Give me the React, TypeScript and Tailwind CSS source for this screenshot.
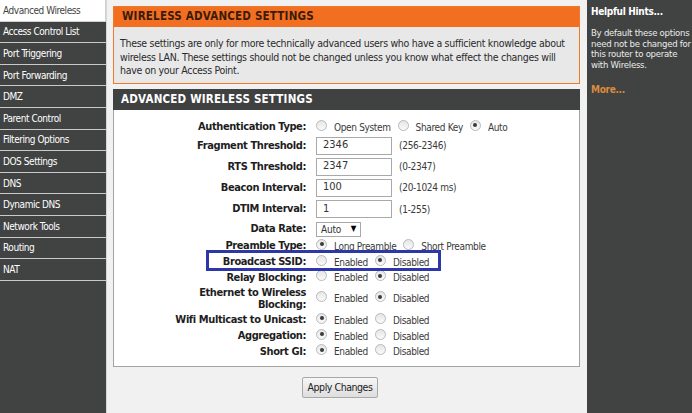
import React from 'react';

const navItems = [
  'Advanced Wireless',
  'Access Control List',
  'Port Triggering',
  'Port Forwarding',
  'DMZ',
  'Parent Control',
  'Filtering Options',
  'DOS Settings',
  'DNS',
  'Dynamic DNS',
  'Network Tools',
  'Routing',
  'NAT',
];

function Radio({ checked }: { checked?: boolean }) {
  return (
    <span className="relative inline-flex w-[11px] h-[11px] shrink-0 rounded-full border border-[#b9b9b9] bg-gradient-to-b from-[#e6e6e6] to-[#fafafa] items-center justify-center -mt-[4px]">
      {checked && <span className="w-[4px] h-[4px] rounded-full bg-[#3a3a3a]" />}
    </span>
  );
}

function RadioGroup({ opts }: { opts: [string, boolean][] }) {
  return (
    <div className="flex items-center">
      {opts.map(([label, checked], i) => (
        <div key={label} className={`flex items-center ${i > 0 ? 'ml-[7px]' : ''}`}>
          <Radio checked={checked} />
          <span className="ml-[7px] text-[10px] tracking-[-0.35px] text-[#3a3a3a]">{label}</span>
        </div>
      ))}
    </div>
  );
}

function TextField({ value, range }: { value: string; range: string }) {
  return (
    <div className="flex items-center">
      <div className="w-[76px] h-[18px] border border-[#a9a9a9] bg-white pl-[6px] flex items-center text-[11px] text-[#333]">
        {value}
      </div>
      <span className="ml-[7px] text-[10px] tracking-[-0.3px] text-[#3a3a3a]">{range}</span>
    </div>
  );
}

type Row = { label: React.ReactNode; h: string; control: React.ReactNode };

const enDis = (enabled: boolean): [string, boolean][] => [
  ['Enabled', enabled],
  ['Disabled', !enabled],
];

const rows: Row[] = [
  { label: 'Authentication Type:', h: 'h-[16px]', control: <RadioGroup opts={[['Open System', false], ['Shared Key', false], ['Auto', true]]} /> },
  { label: 'Fragment Threshold:', h: 'h-[21px]', control: <TextField value="2346" range="(256-2346)" /> },
  { label: 'RTS Threshold:', h: 'h-[21px]', control: <TextField value="2347" range="(0-2347)" /> },
  { label: 'Beacon Interval:', h: 'h-[21px]', control: <TextField value="100" range="(20-1024 ms)" /> },
  { label: 'DTIM Interval:', h: 'h-[22px]', control: <TextField value="1" range="(1-255)" /> },
  {
    label: 'Data Rate:',
    h: 'h-[18px]',
    control: (
      <div className="w-[45px] h-[15px] border border-[#a9a9a9] bg-white flex items-center justify-between px-[4px] text-[10px] tracking-[-0.2px] text-[#333]">
        <span>Auto</span>
        <span className="text-[8px] text-black">▼</span>
      </div>
    ),
  },
  { label: 'Preamble Type:', h: 'h-[16px]', control: <RadioGroup opts={[['Long Preamble', true], ['Short Preamble', false]]} /> },
  { label: 'Broadcast SSID:', h: 'h-[16px]', control: <RadioGroup opts={enDis(false)} /> },
  { label: 'Relay Blocking:', h: 'h-[15px]', control: <RadioGroup opts={enDis(false)} /> },
  {
    label: (
      <>
        Ethernet to Wireless
        <br />
        Blocking:
      </>
    ),
    h: 'h-[27px]',
    control: <RadioGroup opts={enDis(false)} />,
  },
  { label: 'Wifi Multicast to Unicast:', h: 'h-[16px]', control: <RadioGroup opts={enDis(true)} /> },
  { label: 'Aggregation:', h: 'h-[16px]', control: <RadioGroup opts={enDis(true)} /> },
  { label: 'Short GI:', h: 'h-[15px]', control: <RadioGroup opts={enDis(true)} /> },
];

export default function App() {
  return (
    <div className="w-[692px] h-[413px] flex overflow-hidden bg-[#f1f1f1] font-['DejaVu_Sans_Condensed','DejaVu_Sans',sans-serif] text-[#222]">
      {/* left menu */}
      <nav className="w-[107px] shrink-0 bg-[#414242] border-r border-[#d6d6d6] flex flex-col">
        {navItems.map((item, i) => (
          <div
            key={item}
            className={`h-[21.6px] flex items-center pl-[3px] text-[10px] tracking-[-0.45px] border-b ${
              i === 0
                ? 'bg-white text-[#444] border-[#cfcfcf] border-r'
                : 'text-white border-[#c9c9c9]'
            }`}
          >
            {item}
          </div>
        ))}
      </nav>

      {/* main */}
      <main className="w-[480px] shrink-0 pl-[6px] pr-[7px] pt-[6px]">
        <section className="border border-[#f07a2a]">
          <h2 className="h-[20px] bg-[#f26f21] flex items-center pl-[8px] text-[11.5px] font-bold tracking-[0.2px] text-[#3b1b08]">
            WIRELESS ADVANCED SETTINGS
          </h2>
          <p className="bg-[#e8e8e8] h-[56px] px-[6px] pt-[10px] text-[10.5px] tracking-[-0.3px] leading-[13.5px] text-[#2a2a2a]">
            These settings are only for more technically advanced users who have a sufficient knowledge about
            wireless LAN. These settings should not be changed unless you know what effect the changes will
            have on your Access Point.
          </p>
        </section>

        <section className="mt-[5px]">
          <h2 className="h-[21px] bg-[#404141] flex items-center pl-[8px] text-[11.5px] font-bold tracking-[0.2px] text-white">
            ADVANCED WIRELESS SETTINGS
          </h2>
          <div className="relative h-[257px] bg-white border border-t-0 border-[#a3a3a3] pt-[9px]">
            {rows.map((r, i) => (
              <div key={i} className={`${r.h} flex items-center`}>
                <div className="w-[192px] shrink-0 text-right text-[11px] tracking-[-0.4px] font-bold leading-[12px] text-[#1e1e1e]">
                  {r.label}
                </div>
                <div className="ml-[10px]">{r.control}</div>
              </div>
            ))}
            <div className="absolute left-[92px] top-[140px] w-[235px] h-[21px] border-[3px] border-[#2d37a8]" />
          </div>
        </section>

        <div className="mt-[10px] flex pl-[189px]">
          <button className="w-[76px] h-[21px] border border-[#a8a8a8] bg-gradient-to-b from-[#f6f6f6] to-[#dedede] text-[10.5px] tracking-[-0.45px] text-[#222] rounded-[2px]">
            Apply Changes
          </button>
        </div>
      </main>

      {/* right hints */}
      <aside className="flex-1 bg-[#414242] pl-[4px] pr-[1px] pt-[4px] text-white">
        <h3 className="text-[10px] tracking-[-0.3px] font-bold">Helpful Hints...</h3>
        <p className="mt-[9px] text-[9.5px] tracking-[-0.25px] leading-[10.7px] text-[#ececec]">
          By default these options need not be changed for this router to operate with Wireless.
        </p>
        <p className="mt-[11px] text-[10px] tracking-[-0.3px] font-bold text-[#dc8a3e]">More...</p>
      </aside>
    </div>
  );
}
